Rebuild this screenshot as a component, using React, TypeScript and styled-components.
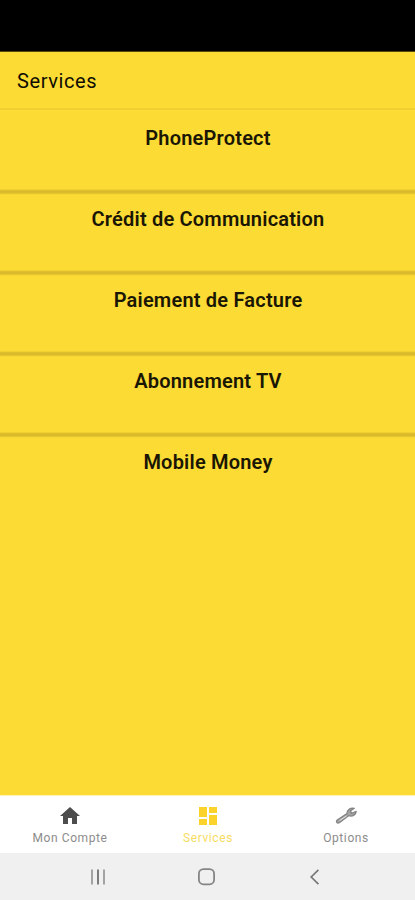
import React from "react";
import styled, { createGlobalStyle } from "styled-components";

const GlobalStyle = createGlobalStyle`
  * { box-sizing: border-box; }
  body { margin: 0; font-family: Roboto, "Liberation Sans", sans-serif; }
`;

const Screen = styled.div`
  width: 415px;
  height: 900px;
  display: flex;
  flex-direction: column;
  overflow: hidden;
  background: #fcdb34;
`;

const StatusBar = styled.div`
  height: 52px;
  flex: none;
  background: linear-gradient(#000 51px, #57490c 51px);
`;

const Header = styled.header`
  height: 58px;
  flex: none;
  display: flex;
  align-items: center;
  padding: 2px 17px 0;
  border-bottom: 2px solid #f2cf31;
`;

const Title = styled.h1`
  margin: 0;
  font-size: 20px;
  font-weight: 400;
  line-height: 24px;
  letter-spacing: 0.6px;
  color: #0f0d02;
`;

const List = styled.main`
  flex: 1;
  display: flex;
  flex-direction: column;
`;

const Row = styled.div`
  height: 80.9px;
  flex: none;
  display: flex;
  flex-direction: column;
  justify-content: space-between;
`;

const RowLabel = styled.div`
  padding: 16px 0 0 1px;
  text-align: center;
  font-size: 20px;
  font-weight: 600;
  line-height: 24px;
  letter-spacing: 0.2px;
  color: #1a1604;
`;

const Divider = styled.div`
  height: 5px;
  transform: translateY(3.3px);
  background: linear-gradient(#efcc30, #d9b92c 35%, #d9b92c 60%, #efcc30);
`;

const Tabs = styled.nav`
  height: 58px;
  flex: none;
  display: grid;
  grid-template-columns: repeat(3, 1fr);
  padding-left: 1px;
  border-top: 1px solid #fff3b5;
  background: #fff;
`;

const Tab = styled.div<{ $color: string }>`
  display: flex;
  flex-direction: column;
  align-items: center;
  padding-top: 8px;
  color: ${(p) => p.$color};
`;

const TabLabel = styled.span<{ $color: string }>`
  margin-top: 2px;
  font-size: 12px;
  line-height: 16px;
  letter-spacing: 0.6px;
  color: ${(p) => p.$color};
`;

const SystemBar = styled.div`
  height: 47px;
  flex: none;
  display: grid;
  grid-template-columns: 1fr 20px 1fr;
  align-items: center;
  background: #f0f0f0;
`;

const Slot = styled.div<{ $start?: number }>`
  display: flex;
  padding-left: ${(p) => p.$start ?? 0}px;
`;

const HomeIcon = () => (
  <svg width="24" height="24" viewBox="0 0 24 24" fill="currentColor">
    <path d="M10 20v-6h4v6h5v-8h3L12 3 2 12h3v8z" />
  </svg>
);

const DashboardIcon = () => (
  <svg width="24" height="24" viewBox="0 0 24 24" fill="currentColor">
    <path d="M3 13h8V3H3v10zm0 8h8v-6H3v6zm10 0h8V11h-8v10zm0-18v6h8V3h-8z" />
  </svg>
);

const WrenchIcon = () => (
  <svg width="24" height="24" viewBox="0 0 24 24" fill="none" stroke="currentColor">
    <path d="M3.2 16 13 9.6c-.2-3.4 3.3-6.3 7.3-5.3l-3.9 2.6 1.3 2.5 4.5-2c-.2 3.6-4 5.5-7.3 4.2L5.3 18.7c-2.3 1.2-3.8-1.2-2.1-2.7z" fill="#a3a3a3" strokeWidth="1.3" strokeLinejoin="round" />
    <path d="M5.6 16.5 12.6 12" stroke="#e8e8e8" strokeWidth="1" />
  </svg>
);

const RecentIcon = () => (
  <svg width="18" height="18" viewBox="0 0 18 18" fill="none" strokeWidth="2">
    <path d="M3 1.5v15M15 1.5v15" stroke="#a3a3a3" />
    <path d="M9 1.5v15" stroke="#7d7d7d" />
  </svg>
);

const HomeButtonIcon = () => (
  <svg width="20" height="20" viewBox="0 0 20 20" fill="none">
    <rect x="0.9" y="2.1" width="15.2" height="15.2" rx="4.6" stroke="#858585" strokeWidth="1.8" />
  </svg>
);

const BackIcon = () => (
  <svg width="12" height="18" viewBox="0 0 12 18" fill="none">
    <path d="M9.4 1.8 2.2 9l7.2 7.2" stroke="#777" strokeWidth="1.7" />
  </svg>
);

const services = [
  "PhoneProtect",
  "Crédit de Communication",
  "Paiement de Facture",
  "Abonnement TV",
  "Mobile Money",
];

export default function App() {
  return (
    <Screen>
      <GlobalStyle />
      <StatusBar />
      <Header>
        <Title>Services</Title>
      </Header>
      <List>
        {services.map((name, i) => (
          <Row key={name}>
            <RowLabel>{name}</RowLabel>
            {i < services.length - 1 && <Divider />}
          </Row>
        ))}
      </List>
      <Tabs>
        <Tab $color="#4d4d4d">
          <HomeIcon />
          <TabLabel $color="#8c8c8c">Mon Compte</TabLabel>
        </Tab>
        <Tab $color="#fbd32b">
          <DashboardIcon />
          <TabLabel $color="#f8dc62">Services</TabLabel>
        </Tab>
        <Tab $color="#858585">
          <WrenchIcon />
          <TabLabel $color="#8c8c8c">Options</TabLabel>
        </Tab>
      </Tabs>
      <SystemBar>
        <Slot $start={89}>
          <RecentIcon />
        </Slot>
        <Slot>
          <HomeButtonIcon />
        </Slot>
        <Slot $start={91}>
          <BackIcon />
        </Slot>
      </SystemBar>
    </Screen>
  );
}
